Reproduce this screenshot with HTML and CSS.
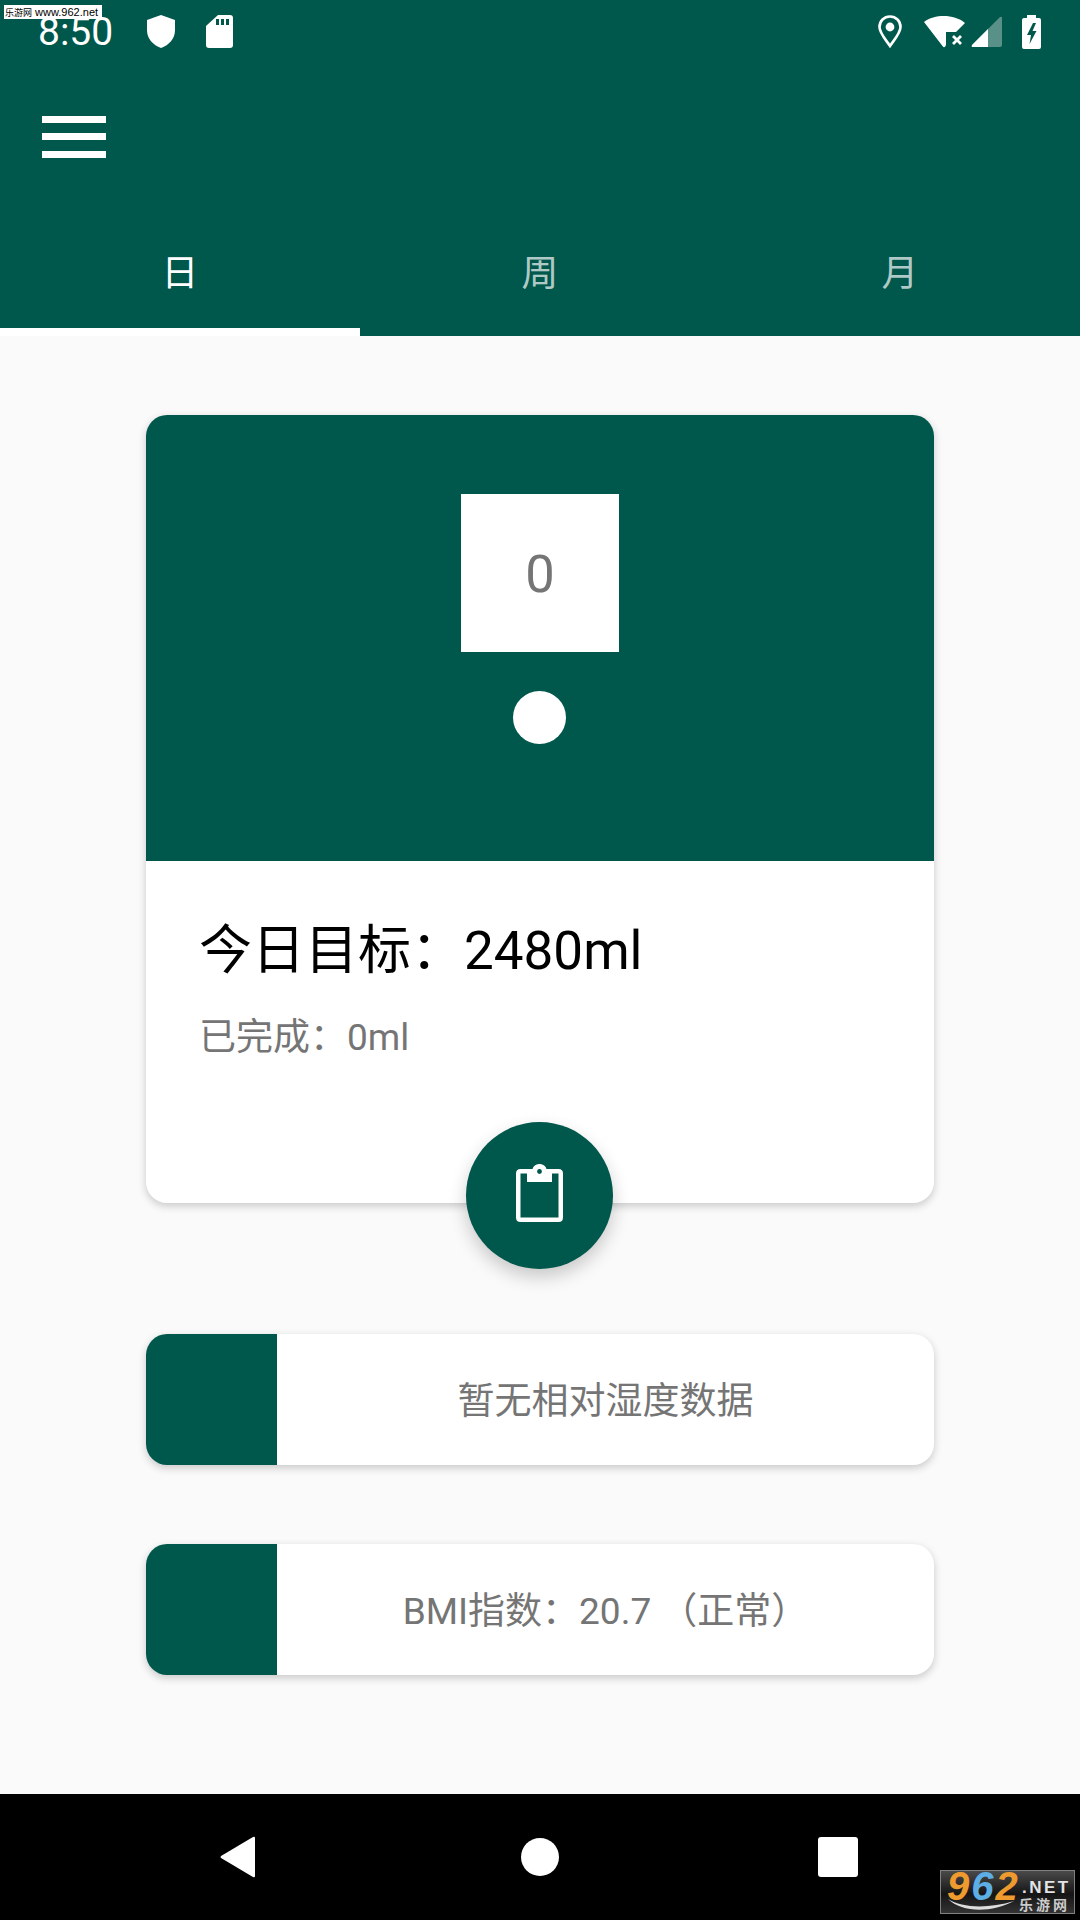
FILE: index.html
```html
<!DOCTYPE html>
<html lang="zh-CN">
<head>
  <meta charset="UTF-8">
  <meta name="viewport" content="width=device-width, initial-scale=1">
  <title>喝水</title>
  <link rel="stylesheet" href="styles.css">
</head>
<body>
  <div class="watermark"><span class="watermark-cn">乐游网</span> www.962.net</div>

  <!-- Header -->
  <div class="header">
    <div class="statusbar">
      <div class="status-left">
        <span class="clock">8:50</span>
        <svg class="icon-shield" viewBox="0 0 28 33"><path d="M14 0 L28 5 V15 C28 24 22 30 14 33 C6 30 0 24 0 15 V5 Z" fill="#fff"/></svg>
        <svg class="icon-sd" viewBox="0 0 27 33"><path d="M12 0 H24 Q27 0 27 3 V30 Q27 33 24 33 H3 Q0 33 0 30 V11 Z" fill="#fff"/><path d="M10 4 H13 V10 H10 Z M15 4 H18 V10 H15 Z M20 4 H23 V10 H20 Z" fill="#00574b"/></svg>
      </div>
      <div class="status-right">
        <svg class="icon-pin" viewBox="0 0 24 33"><path d="M12 1.500 C6 1.500 1.500 6 1.500 12 C1.500 18 8 25 12 31 C16 25 22.500 18 22.500 12 C22.500 6 18 1.500 12 1.500 Z" fill="none" stroke="#fff" stroke-width="2.600"/><circle cx="12" cy="12" r="4.400" fill="#fff"/></svg>
        <svg class="icon-wifi" viewBox="0 0 41 32"><path d="M0 6 C11 -2 30 -2 41 7 L32 16 H22 V29 Q20.500 33 18.500 30 Z" fill="#fff"/><path d="M29 20 L37 28 M37 20 L29 28" stroke="#fff" stroke-width="2.800"/></svg>
        <svg class="icon-signal" viewBox="0 0 31 31"><path d="M31 2 V29 Q31 31 29 31 H2 Q0 31 1 29 L29 1 Q31 0 31 2 Z" fill="#fff" fill-opacity=".35"/><path d="M17 13 V31 H2 Q0 31 1 29 Z" fill="#fff"/></svg>
        <svg class="icon-battery" viewBox="0 0 19 34"><path d="M5 0 H14 V3 H17 Q19 3 19 5 V32 Q19 34 17 34 H2 Q0 34 0 32 V5 Q0 3 2 3 H5 Z" fill="#fff"/><path d="M11 8 L5 20 H9 L7.500 29 L14.500 16 H10.500 L14 8 Z" fill="#00574b"/></svg>
      </div>
    </div>
    <div class="toolbar">
      <div class="menu-btn"><span></span><span></span><span></span></div>
    </div>
    <div class="tabs">
      <div class="tab active">日</div>
      <div class="tab">周</div>
      <div class="tab">月</div>
    </div>
  </div>

  <!-- Content -->
  <div class="content">
    <div class="card goal-card">
      <div class="goal-top">
        <div class="cup">0</div>
        <div class="dot"></div>
      </div>
      <div class="goal-info">
        <div class="goal-title">今日目标：2480ml</div>
        <div class="goal-done">已完成：0ml</div>
      </div>
      <div class="fab">
        <svg class="icon-clip" viewBox="0 0 47 58"><path d="M11 7.250 H4.500 Q2.250 7.250 2.250 9.500 V53.500 Q2.250 55.750 4.500 55.750 H42.500 Q44.750 55.750 44.750 53.500 V9.500 Q44.750 7.250 42.500 7.250 H36" fill="none" stroke="#fff" stroke-width="4.500"/><path d="M11 5 H16.500 C18 -1.700 29 -1.700 30.500 5 H36 V18 H11 Z" fill="#fff"/><circle cx="23.500" cy="7.500" r="2.400" fill="#00574b"/></svg>
      </div>
    </div>

    <div class="card info-row">
      <div class="info-side"></div>
      <div class="info-text">暂无相对湿度数据</div>
    </div>
    <div class="card info-row">
      <div class="info-side"></div>
      <div class="info-text">BMI指数：20.7 （正常）</div>
    </div>
  </div>

  <!-- Nav bar -->
  <div class="navbar">
    <svg class="nav-back" viewBox="0 0 36 42"><path d="M35 2 V40 Q35 42 33 41 L1 22 Q0 21 1 20 L33 1 Q35 0 35 2 Z" fill="#fff"/></svg>
    <div class="nav-home"></div>
    <div class="nav-recent"></div>
    <div class="logo-962">
      <div class="logo-num"><span class="d9">9</span><span class="d6">6</span><span class="d2">2</span></div>
      <div class="logo-net">.NET</div>
      <svg class="logo-swoosh" viewBox="0 0 66 12"><path d="M0 0 C14 9 40 10 66 2 C44 14 14 14 0 0 Z" fill="#ddd"/></svg>
      <div class="logo-cn">乐游网</div>
    </div>
  </div>
</body>
</html>
```
FILE: styles.css
```css
* {
  box-sizing: border-box;
}

html, body {
  margin: 0;
  height: 1920px;
}

body {
  width: 1080px;
  display: flex;
  flex-direction: column;
  position: relative;
  overflow: hidden;
  background: #fafafa;
  font-family: Roboto, "Noto Sans CJK SC", sans-serif;
}

.watermark {
  position: absolute;
  left: 4px;
  top: 5px;
  width: 98px;
  height: 14px;
  background: #fff;
  color: #000;
  font-size: 11px;
  line-height: 14px;
  padding-left: 1px;
  white-space: nowrap;
  font-family: "Liberation Sans", "Noto Sans CJK SC", sans-serif;
}

.watermark-cn {
  font-size: 9px;
}

/* Header */
.header {
  background: #00574b;
  height: 336px;
  display: flex;
  flex-direction: column;
}

.statusbar {
  height: 63px;
  display: flex;
  justify-content: space-between;
  align-items: center;
  padding: 0 39px 0 38px;
  color: #fff;
}

.status-left, .status-right {
  display: flex;
  align-items: center;
}

.clock {
  font-size: 39px;
  width: 109px;
}

.icon-shield {
  width: 28px;
  height: 33px;
  margin-right: 31px;
}

.icon-sd {
  width: 27px;
  height: 33px;
}

.icon-pin {
  width: 24px;
  height: 33px;
  margin-right: 22px;
}

.icon-wifi {
  width: 41px;
  height: 32px;
  margin-right: 6px;
}

.icon-signal {
  width: 31px;
  height: 31px;
  margin-right: 20px;
}

.icon-battery {
  width: 19px;
  height: 34px;
}

.toolbar {
  height: 147px;
  display: flex;
  align-items: center;
  padding-left: 42px;
}

.menu-btn {
  width: 64px;
  display: flex;
  flex-direction: column;
  gap: 10.500px;
}

.menu-btn span {
  height: 7px;
  background: #fff;
}

.tabs {
  flex: 1;
  display: flex;
}

.tab {
  flex: 1;
  display: flex;
  align-items: center;
  justify-content: center;
  font-size: 36.750px;
  color: rgba(255, 255, 255, .7);
  padding-bottom: 6px;
}

.tab.active {
  color: #fff;
  box-shadow: inset 0 -8px #fff;
}

/* Cards */
.content {
  flex: 1;
  padding: 79px 146px 0;
  display: flex;
  flex-direction: column;
  gap: 79px;
}

.card {
  background: #fff;
  border-radius: 21px;
  box-shadow: 0 3px 8px rgba(0, 0, 0, .2);
}

.goal-card {
  height: 788px;
  margin-bottom: 52px;
  position: relative;
}

.goal-top {
  height: 446px;
  background: #00574b;
  border-radius: 21px 21px 0 0;
  padding-top: 79px;
  display: flex;
  flex-direction: column;
  align-items: center;
}

.cup {
  width: 158px;
  height: 158px;
  background: #fff;
  color: #757575;
  font-size: 52.500px;
  padding-top: 2px;
  display: flex;
  align-items: center;
  justify-content: center;
}

.dot {
  width: 53px;
  height: 53px;
  margin: 39px 1px 0 0;
  border-radius: 50%;
  background: #fff;
}

.goal-info {
  padding: 55px 54px 0 53px;
}

.goal-title {
  font-size: 53px;
  line-height: 70px;
  color: #000;
}

.goal-done {
  font-size: 37px;
  line-height: 50px;
  margin-top: 27px;
  color: #757575;
}

.fab {
  position: absolute;
  left: 320px;
  top: 707px;
  width: 147px;
  height: 147px;
  border-radius: 50%;
  background: #00574b;
  box-shadow: 0 8px 18px rgba(0, 0, 0, .2);
  padding-bottom: 5px;
  display: flex;
  align-items: center;
  justify-content: center;
}

.icon-clip {
  width: 47px;
  height: 58px;
}

.info-row {
  height: 131px;
  display: flex;
  overflow: hidden;
}

.info-side {
  width: 131px;
  background: #00574b;
}

.info-text {
  flex: 1;
  display: flex;
  align-items: center;
  justify-content: center;
  font-size: 37px;
  color: #757575;
  padding-bottom: 4px;
}

/* Nav bar */
.navbar {
  height: 126px;
  background: #000;
  position: relative;
}

.nav-back {
  position: absolute;
  left: 220px;
  top: 42px;
  width: 36px;
  height: 42px;
}

.nav-home {
  position: absolute;
  left: 521px;
  top: 44px;
  width: 38px;
  height: 38px;
  border-radius: 50%;
  background: #fff;
}

.nav-recent {
  position: absolute;
  left: 818px;
  top: 43px;
  width: 40px;
  height: 40px;
  border-radius: 3px;
  background: #fff;
}

/* Corner logo stamped over the nav bar */
.logo-962 {
  position: absolute;
  left: 940px;
  top: 76px;
  width: 135px;
  height: 44px;
  background: linear-gradient(#4a4a4a, #151515 55%, #333);
  border: 1px solid #808080;
  font-weight: 700;
}

.logo-num {
  position: absolute;
  left: 6px;
  top: -3px;
  font: italic 700 40px/36px "Liberation Sans", sans-serif;
  letter-spacing: 2px;
}

.d9, .d2 {
  color: #ee9a2e;
}

.d6 {
  color: #5eaee6;
}

.logo-net {
  position: absolute;
  left: 81px;
  top: 8px;
  font: 700 17px/18px "Liberation Sans", sans-serif;
  letter-spacing: 2.500px;
  color: #e4e4e4;
}

.logo-swoosh {
  position: absolute;
  left: 7px;
  top: 28px;
  width: 66px;
  height: 12px;
}

.logo-cn {
  position: absolute;
  left: 78px;
  top: 25px;
  font-size: 14px;
  line-height: 18px;
  letter-spacing: 3px;
  color: #ccc;
}
```
